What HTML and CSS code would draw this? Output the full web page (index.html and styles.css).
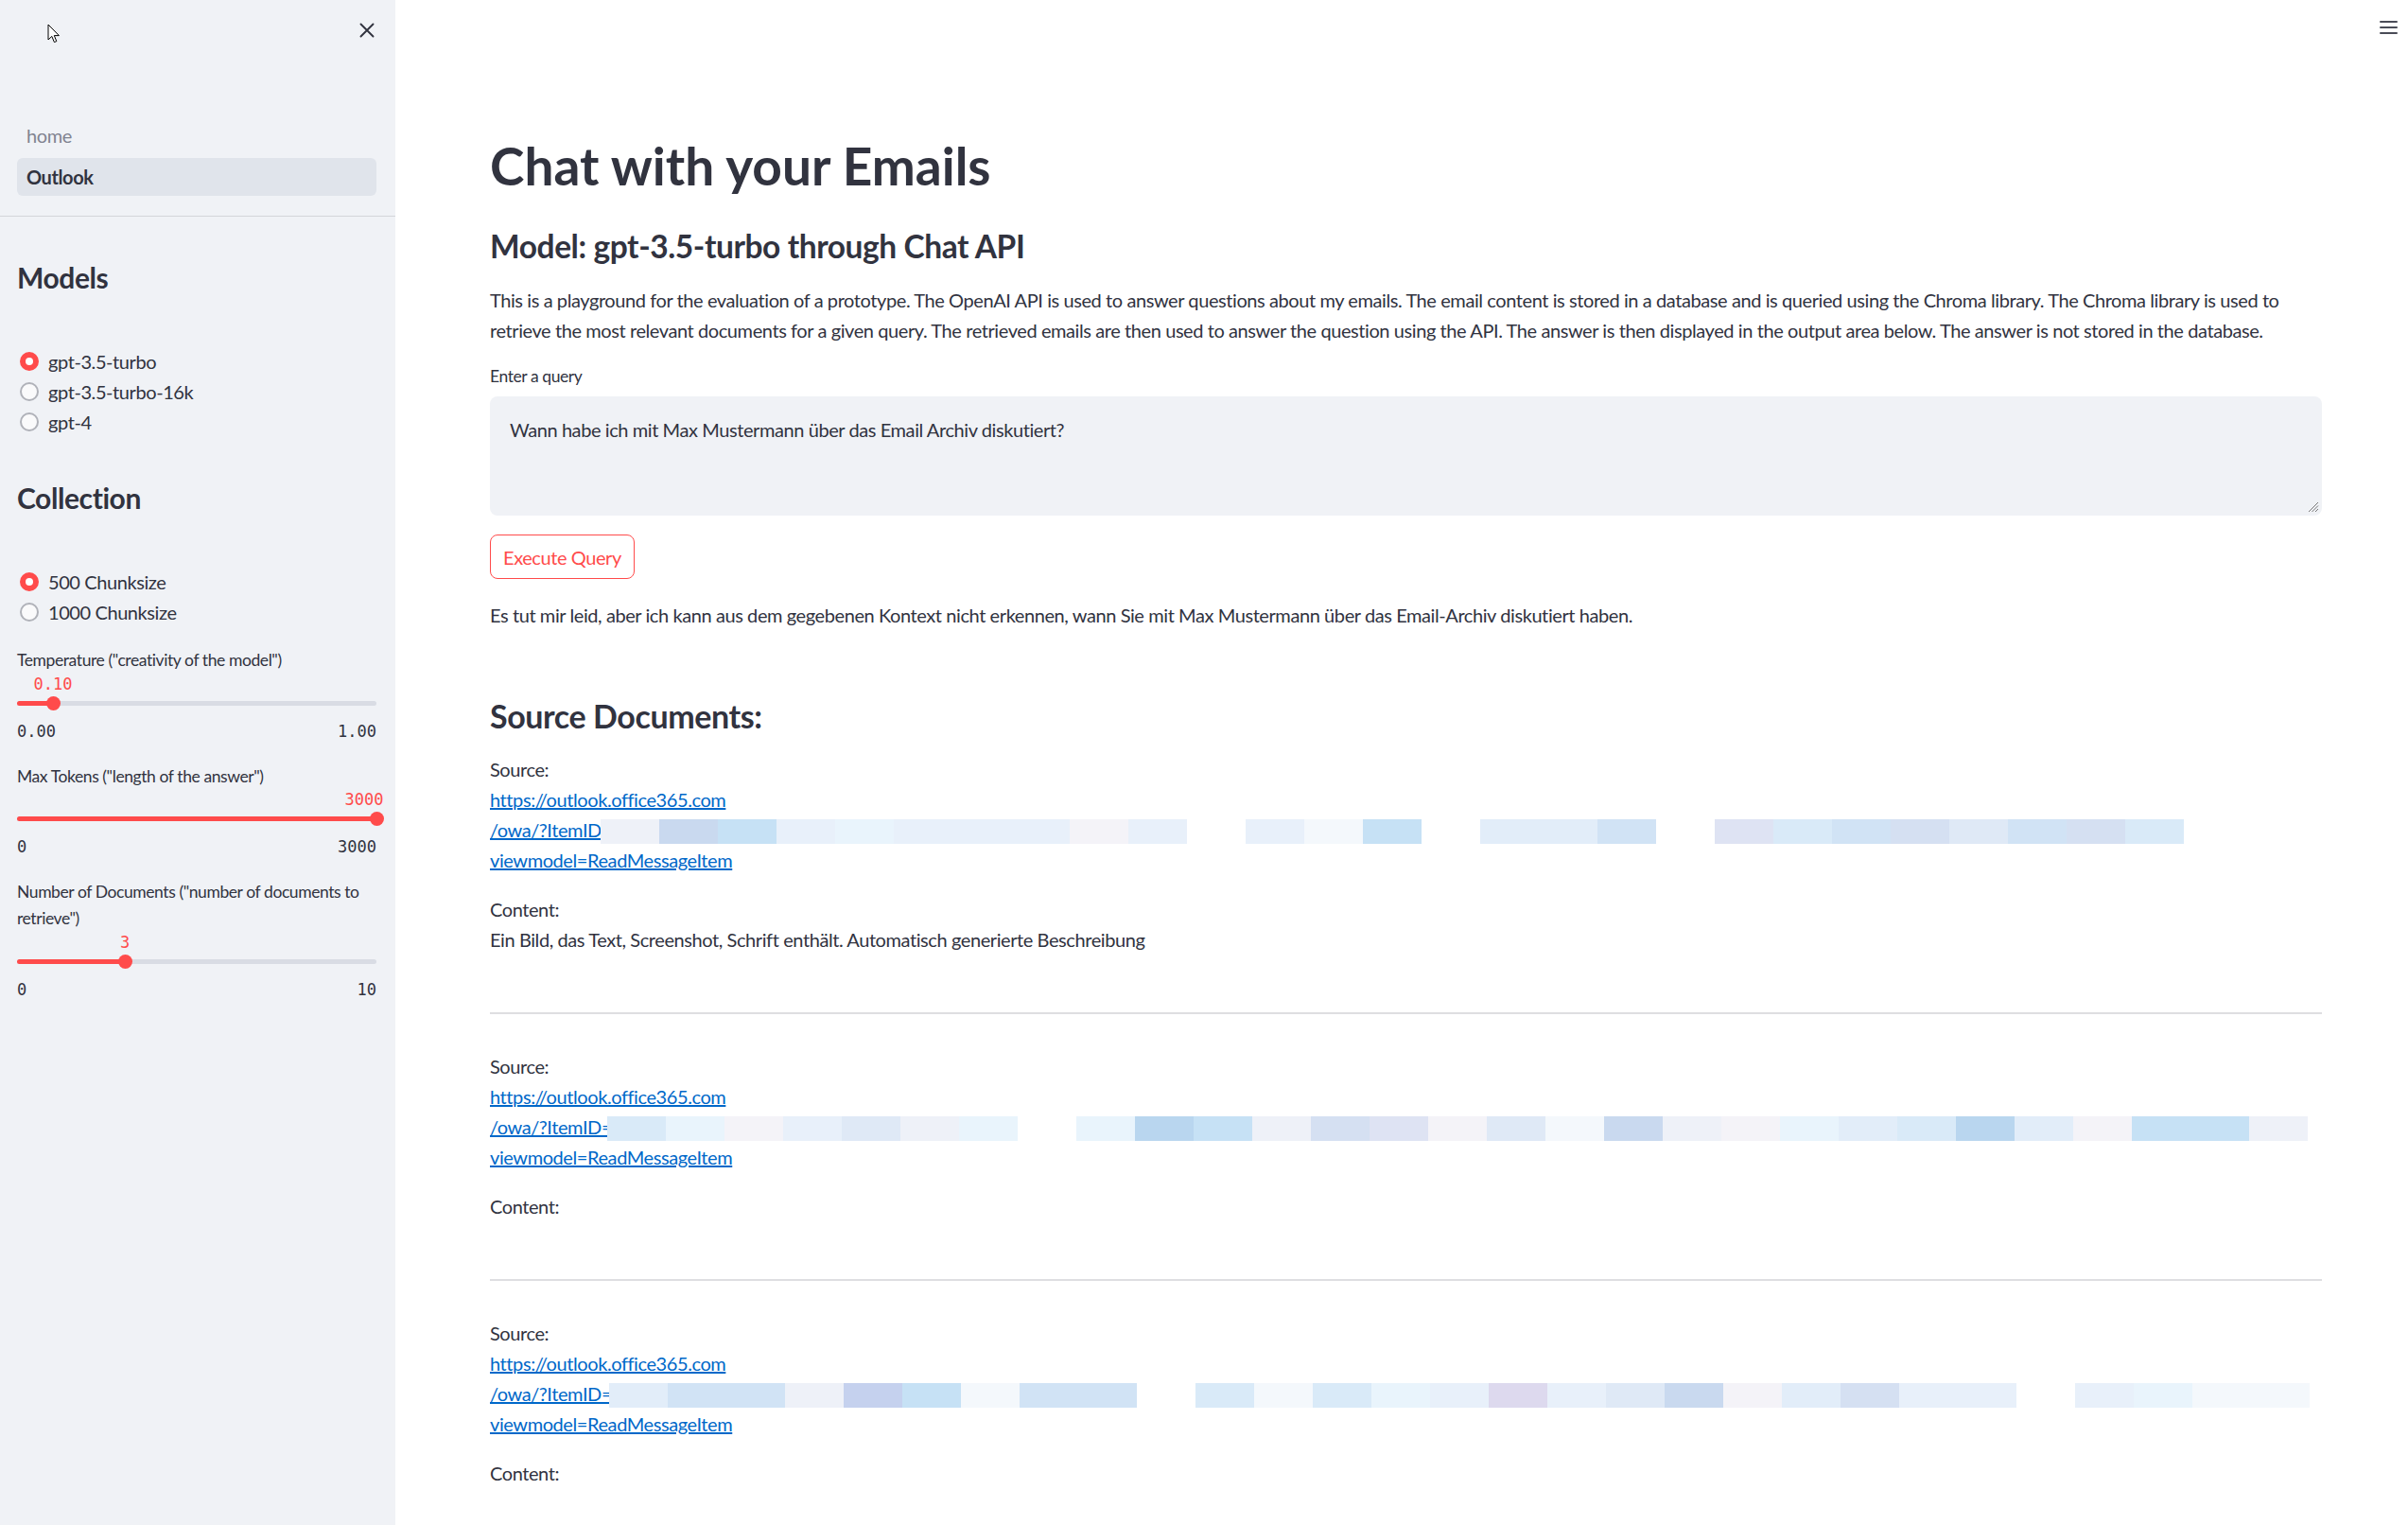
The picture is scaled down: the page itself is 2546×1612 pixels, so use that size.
FILE: index.html
```html
<!DOCTYPE html>
<html lang="en">
<head>
<meta charset="utf-8">
<title>Outlook · Chat with your Emails</title>
<link rel="stylesheet" href="styles.css">
</head>
<body>
<div class="app">
  <aside class="sidebar">
    <div class="side-header">
      <svg class="cursor" width="14" height="21" viewBox="0 0 14 21"><path d="M1 1 L1 17 L4.8 13.4 L7.4 19.6 L9.8 18.6 L7.3 12.6 L12.4 12.6 Z" fill="#fff" stroke="#000" stroke-width="1" stroke-linejoin="round"/></svg>
      <button class="close-btn" aria-label="Close sidebar">
        <svg width="16" height="16" viewBox="0 0 16 16"><path d="M1.5 1.5 L14.5 14.5 M14.5 1.5 L1.5 14.5" stroke="#31333f" stroke-width="1.9" stroke-linecap="round"/></svg>
      </button>
    </div>
    <nav class="side-nav">
      <a class="nav-item">home</a>
      <a class="nav-item active">Outlook</a>
    </nav>
    <div class="side-content">
      <h2 class="side-title">Models</h2>
      <div class="radio-group">
        <div class="radio-row"><span class="radio on"></span><span class="radio-label">gpt-3.5-turbo</span></div>
        <div class="radio-row"><span class="radio"></span><span class="radio-label">gpt-3.5-turbo-16k</span></div>
        <div class="radio-row"><span class="radio"></span><span class="radio-label">gpt-4</span></div>
      </div>
      <h2 class="side-title">Collection</h2>
      <div class="radio-group">
        <div class="radio-row"><span class="radio on"></span><span class="radio-label">500 Chunksize</span></div>
        <div class="radio-row"><span class="radio"></span><span class="radio-label">1000 Chunksize</span></div>
      </div>

      <div class="slider-widget first">
        <div class="widget-label">Temperature ("creativity of the model")</div>
        <div class="slider-body">
          <div class="track">
            <div class="fill" style="width:10%"></div>
            <div class="thumb" style="left:10%"><span class="thumb-value">0.10</span></div>
          </div>
          <div class="ticks"><span>0.00</span><span>1.00</span></div>
        </div>
      </div>

      <div class="slider-widget">
        <div class="widget-label">Max Tokens ("length of the answer")</div>
        <div class="slider-body">
          <div class="track">
            <div class="fill" style="width:100%"></div>
            <div class="thumb" style="left:100%"><span class="thumb-value end">3000</span></div>
          </div>
          <div class="ticks"><span>0</span><span>3000</span></div>
        </div>
      </div>

      <div class="slider-widget">
        <div class="widget-label">Number of Documents ("number of documents to retrieve")</div>
        <div class="slider-body">
          <div class="track">
            <div class="fill" style="width:30%"></div>
            <div class="thumb" style="left:30%"><span class="thumb-value">3</span></div>
          </div>
          <div class="ticks"><span>0</span><span>10</span></div>
        </div>
      </div>
    </div>
  </aside>

  <main class="main">
    <div class="menu-btn" aria-label="Main menu"><span></span><span></span><span></span></div>
    <div class="block">
      <h1 class="title">Chat with your Emails</h1>
      <h3 class="subtitle">Model: gpt-3.5-turbo through Chat API</h3>
      <p class="intro">This is a playground for the evaluation of a prototype. The OpenAI API is used to answer questions about my emails. The email content is stored in a database and is queried using the Chroma library. The Chroma library is used to retrieve the most relevant documents for a given query. The retrieved emails are then used to answer the question using the API. The answer is then displayed in the output area below. The answer is not stored in the database.</p>
      <label class="field-label">Enter a query</label>
      <div class="textarea">Wann habe ich mit Max Mustermann über das Email Archiv diskutiert?
        <svg class="grip" width="12" height="12" viewBox="0 0 12 12"><path d="M11 1 L1 11 M11 4.5 L4.5 11 M11 8 L8 11" stroke="#777" stroke-width="1"/></svg>
      </div>
      <button class="exec-btn">Execute Query</button>
      <p class="answer">Es tut mir leid, aber ich kann aus dem gegebenen Kontext nicht erkennen, wann Sie mit Max Mustermann über das Email-Archiv diskutiert haben.</p>

      <h3 class="sources-title">Source Documents:</h3>

      <div class="doc">
        <p class="src">Source:<br>
          <a class="lnk">https://outlook.office365.com</a><br>
          <span class="nowrap"><a class="lnk">/owa/?ItemID=</a><span class="redact r1"><span class="px pd"></span><span class="px pb"></span><span class="px pc"></span><span class="px pa"></span><span class="px pe"></span><span class="px pa"></span><span class="px pa"></span><span class="px pa"></span><span class="px pf"></span><span class="px pa"></span><span class="px p0"></span><span class="px pa"></span><span class="px pj"></span><span class="px pc"></span><span class="px p0"></span><span class="px pm"></span><span class="px pm"></span><span class="px pg"></span><span class="px p0"></span><span class="px ph"></span><span class="px pn"></span><span class="px pg"></span><span class="px po"></span><span class="px pq"></span><span class="px pg"></span><span class="px po"></span><span class="px pn"></span></span></span><br>
          <a class="lnk">viewmodel=ReadMessageItem</a></p>
        <p class="content">Content:<br>Ein Bild, das Text, Screenshot, Schrift enthält. Automatisch generierte Beschreibung</p>
      </div>
      <hr class="divider">

      <div class="doc">
        <p class="src">Source:<br>
          <a class="lnk">https://outlook.office365.com</a><br>
          <span class="nowrap"><a class="lnk">/owa/?ItemID=</a><span class="redact r2"><span class="px pn"></span><span class="px pe"></span><span class="px pf"></span><span class="px pa"></span><span class="px pq"></span><span class="px pd"></span><span class="px pe"></span><span class="px p0"></span><span class="px pe"></span><span class="px pi"></span><span class="px pc"></span><span class="px pd"></span><span class="px po"></span><span class="px ph"></span><span class="px pf"></span><span class="px pq"></span><span class="px pj"></span><span class="px pb"></span><span class="px pd"></span><span class="px pf"></span><span class="px pe"></span><span class="px pm"></span><span class="px pn"></span><span class="px pi"></span><span class="px pm"></span><span class="px pf"></span><span class="px pc"></span><span class="px pc"></span><span class="px pd"></span></span></span><br>
          <a class="lnk">viewmodel=ReadMessageItem</a></p>
        <p class="content">Content:</p>
      </div>
      <hr class="divider">

      <div class="doc">
        <p class="src">Source:<br>
          <a class="lnk">https://outlook.office365.com</a><br>
          <span class="nowrap"><a class="lnk">/owa/?ItemID=</a><span class="redact r3"><span class="px pm"></span><span class="px pg"></span><span class="px pg"></span><span class="px pd"></span><span class="px pl"></span><span class="px pc"></span><span class="px pj"></span><span class="px pg"></span><span class="px pg"></span><span class="px p0"></span><span class="px pn"></span><span class="px pj"></span><span class="px pn"></span><span class="px pe"></span><span class="px pa"></span><span class="px pk"></span><span class="px pa"></span><span class="px pq"></span><span class="px pb"></span><span class="px pf"></span><span class="px pm"></span><span class="px po"></span><span class="px pa"></span><span class="px pa"></span><span class="px p0"></span><span class="px pa"></span><span class="px pe"></span><span class="px pj"></span><span class="px pj"></span></span></span><br>
          <a class="lnk">viewmodel=ReadMessageItem</a></p>
        <p class="content">Content:</p>
      </div>
    </div>
  </main>
</div>
</body>
</html>
```

FILE: styles.css
```css
* { box-sizing: border-box; }
html, body { margin: 0; padding: 0; }
body {
  font-family: "Lato", "Open Sans", sans-serif;
  color: #31333f;
  background: #fff;
  height: 1612px;
  overflow: hidden;
  letter-spacing: -0.026em;
}
.app { display: flex; min-height: 1612px; }

/* ---------- sidebar ---------- */
.sidebar {
  width: 418px;
  flex: 0 0 418px;
  background: #f0f2f6;
  display: flex;
  flex-direction: column;
  position: relative;
}
.side-header {
  height: 64px;
  display: flex;
  align-items: center;
  justify-content: flex-end;
  padding-right: 22px;
}
.cursor { position: absolute; left: 50px; top: 25px; }
.close-btn {
  border: 0; background: transparent; padding: 0; width: 16px; height: 16px;
  display: flex;
}
.side-nav {
  margin-top: 59px;
  padding: 0 20px 21px 18px;
  display: flex;
  flex-direction: column;
  gap: 4px;
  border-bottom: 1px solid #d3d5da;
}
.nav-item {
  height: 40px;
  display: flex;
  align-items: center;
  padding-left: 10px;
  font-size: 20px;
  color: #808390;
  border-radius: 6px;
}
.nav-item.active { background: #e0e4eb; color: #31333f; font-weight: 700; }

.side-content {
  padding: 0 20px 0 18px;
  display: flex;
  flex-direction: column;
}
.side-title {
  margin: 46px 0 0;
  font-size: 30px;
  line-height: 36px;
  font-weight: 700;
}
.radio-group { margin-top: 55px; display: flex; flex-direction: column; }
.radio-row { height: 32px; display: flex; align-items: center; padding-left: 3px; }
.radio {
  width: 20px; height: 20px; border-radius: 50%;
  background: #fafafb;
  border: 2px solid #b0b2b9;
  margin-right: 10px;
  flex: 0 0 20px;
  display: flex; align-items: center; justify-content: center;
}
.radio.on { background: #ff4b4b; border-color: #ff4b4b; }
.radio.on::after { content: ""; width: 8px; height: 8px; border-radius: 50%; background: #fff; }
.radio-label { font-size: 20px; }

.slider-widget { margin-top: 23px; }
.slider-widget.first { margin-top: 21px; }
.widget-label { font-size: 17.5px; line-height: 28px; }
.slider-body { padding-top: 28.5px; }
.track {
  position: relative;
  height: 5px;
  border-radius: 3px;
  background: #d9dce4;
}
.fill { height: 5px; border-radius: 3px; background: #ff4b4b; }
.thumb {
  position: absolute;
  top: -5px;
  width: 15px; height: 15px;
  margin-left: -7.5px;
  border-radius: 50%;
  background: #ff4b4b;
}
.thumb-value {
  position: absolute;
  bottom: 17px;
  left: 50%;
  transform: translateX(-50%);
  font-family: "DejaVu Sans Mono", "Liberation Mono", monospace;
  letter-spacing: 0;
  font-size: 17px;
  line-height: 22px;
  color: #ff4b4b;
  white-space: nowrap;
}
.thumb-value.end { left: auto; right: 0; transform: none; }
.ticks {
  margin-top: 16px;
  display: flex;
  justify-content: space-between;
  font-family: "DejaVu Sans Mono", "Liberation Mono", monospace;
  letter-spacing: 0;
  font-size: 17px;
  line-height: 22px;
}

/* ---------- main ---------- */
.main {
  flex: 1;
  position: relative;
  padding: 0 91px 0 100px;
}
.menu-btn {
  position: absolute;
  top: 22px; right: 11px;
  width: 19px;
  display: flex; flex-direction: column; gap: 4px;
}
.menu-btn span { display: block; height: 2px; background: #4a4c57; border-radius: 1px; }

.block { display: flex; flex-direction: column; align-items: flex-start; }
.title {
  margin: 142px 0 0;
  font-size: 55px;
  line-height: 66px;
  font-weight: 700;
  letter-spacing: 0;
}
.subtitle {
  margin: 31px 0 0;
  font-size: 33.5px;
  line-height: 42px;
  font-weight: 700;
}
p { margin: 0; }
.intro, .answer, .src, .content { font-size: 20px; line-height: 32px; }
.intro { margin-top: 20px; }
.field-label { margin-top: 21px; font-size: 17.5px; line-height: 24px; }
.textarea {
  position: relative;
  margin-top: 9px;
  width: 100%;
  height: 126px;
  background: #f0f2f6;
  border-radius: 8px;
  padding: 19px 21px;
  font-size: 20px;
  line-height: 32px;
}
.grip { position: absolute; right: 3px; bottom: 3px; }
.exec-btn {
  margin-top: 20px;
  height: 47px;
  padding: 0 13px;
  background: #fff;
  border: 1px solid #ff4b4b;
  border-radius: 8px;
  color: #ff4b4b;
  font-family: inherit;
  letter-spacing: inherit;
  font-size: 20px;
}
.answer { margin-top: 22px; }
.sources-title {
  margin: 70px 0 0;
  font-size: 34px;
  line-height: 42px;
  font-weight: 700;
}
.doc { margin-top: 19px; display: flex; flex-direction: column; gap: 20px; width: 100%; }
.divider + .doc { margin-top: 39px; }
.lnk { color: #0068c9; text-decoration: underline; }
.nowrap { white-space: nowrap; }
.redact { display: inline-block; vertical-align: -5px; height: 26px; white-space: nowrap; }
.r1 { margin-left: -12px; }
.r2 { margin-left: -5px; }
.r3 { margin-left: -3px; }
.px { display: inline-block; width: 62px; height: 26px; vertical-align: top; }
.p0 { background: transparent; }
.pa { background: #e8f0fa; }
.pb { background: #c9d9ef; }
.pc { background: #c6e1f5; }
.pd { background: #eef1f8; }
.pe { background: #e9f4fc; }
.pf { background: #f4f3f8; }
.pg { background: #d1e3f5; }
.ph { background: #dee3f3; }
.pi { background: #b9d6ef; }
.pj { background: #f4f8fc; }
.pk { background: #ddd9ee; }
.pl { background: #c5d1ee; }
.pm { background: #e2edf9; }
.pn { background: #d9eaf8; }
.po { background: #d5e0f2; }
.pq { background: #dfe9f6; }
.divider {
  width: 100%;
  margin: 61px 0 0;
  border: 0;
  border-top: 2px solid #dedee1;
}
```
